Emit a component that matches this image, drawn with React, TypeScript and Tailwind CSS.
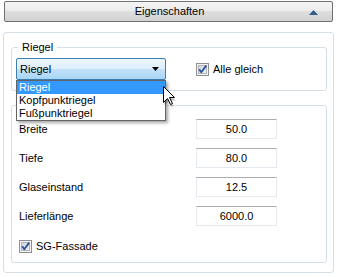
import React from "react";

function CheckBox() {
  return (
    <svg width="13" height="13" viewBox="0 0 13 13" className="shrink-0 block">
      <defs>
        <linearGradient id="cbg" x1="0" y1="0" x2="1" y2="1">
          <stop offset="0" stopColor="#cfd3d8" />
          <stop offset="1" stopColor="#f4f4f4" />
        </linearGradient>
      </defs>
      <rect x="0.5" y="0.5" width="12" height="12" fill="#f4f4f4" stroke="#8e8f8f" />
      <rect x="2.5" y="2.5" width="8" height="8" fill="url(#cbg)" stroke="#b0b4b9" strokeWidth="1" />
      <path d="M3.2 6.2 L5.3 9.2 L10.2 2.6" fill="none" stroke="#2a4f9a" strokeWidth="1.8" strokeLinejoin="round" />
    </svg>
  );
}

function Cursor() {
  return (
    <svg width="14" height="21" viewBox="0 0 14 21" className="block">
      <path
        d="M1.5 3.5 L1.5 19.5 L5.5 15.5 L8.5 21 L10.5 20 L7.8 14.5 L12.5 14.5 Z"
        fill="rgba(0,0,0,0.25)"
      />
      <path
        d="M0.5 0.5 L0.5 16.5 L4.5 12.5 L7.5 18.5 L9.5 17.5 L6.5 11.5 L11.5 11.5 Z"
        fill="#ffffff"
        stroke="#000000"
        strokeWidth="1"
        strokeLinejoin="miter"
      />
    </svg>
  );
}

function InputRow({ label, value }: { label: string; value: string }) {
  return (
    <div className="flex items-center h-[20px]">
      <div className="w-[184px] pl-[7px] leading-[13px]">{label}</div>
      <div className="w-[81px] h-[20px] border border-[#e3e9ef] border-t-[#abadb3] bg-white flex items-center justify-center leading-[13px]">
        {value}
      </div>
    </div>
  );
}

export default function App() {
  return (
    <div className="w-[338px] h-[277px] bg-white text-black text-[11px] font-['Liberation_Sans',Arial,sans-serif] pt-[1px] overflow-hidden">
      <div className="relative ml-[4px] w-[329px] h-[21px] rounded-[2px] border border-[#707070] bg-[linear-gradient(to_bottom,#f4f4f4_0%,#ececec_45%,#dedede_50%,#d2d2d2_100%)] flex items-center justify-center">
        <span className="leading-[13px] pl-[2px]">Eigenschaften</span>
        <svg width="9" height="5" viewBox="0 0 9 5" className="absolute right-[14px] top-[8px]">
          <path d="M0 5 L4.5 0 L9 5 Z" fill="#2d5f8f" />
        </svg>
      </div>

      <div className="ml-[3px] mt-[10px] w-[331px] h-[241px] border border-[#d5dfe5] rounded-[3px] pt-[8px] pl-[7px]">
        <fieldset className="relative w-[316px] border border-[#d5dfe5] rounded-[3px] px-[4px] pt-[4px] pb-[10px] m-0 min-w-0">
          <legend className="ml-[2px] px-[2px] leading-[13px] p-0">
            <span className="px-[2px]">Riegel</span>
          </legend>
          <div className="flex items-center">
            <div className="relative w-[150px] h-[22px]">
              <div className="w-full h-full border border-[#3c7fb1] rounded-[2px] bg-[linear-gradient(to_bottom,#edf6fd_0%,#deeefc_50%,#c3e2f9_50%,#a9d5f5_100%)] flex items-center pl-[3px] pr-[6px]">
                <span className="flex-1 leading-[13px]">Riegel</span>
                <svg width="7" height="4" viewBox="0 0 7 4">
                  <path d="M0 0 L7 0 L3.5 4 Z" fill="#000" />
                </svg>
              </div>
              <div className="absolute left-0 top-[22px] w-[150px] border border-[#646464] bg-white shadow-[2px_2px_3px_rgba(0,0,0,0.35)] z-10">
                <div className="h-[13px] leading-[13px] pl-[2px] bg-[#3399ff] text-white">Riegel</div>
                <div className="h-[13px] leading-[13px] pl-[2px]">Kopfpunktriegel</div>
                <div className="h-[13px] leading-[13px] pl-[2px]">Fußpunktriegel</div>
              </div>
              <div className="absolute left-[147px] top-[28px] z-20">
                <Cursor />
              </div>
            </div>
            <div className="ml-[30px] flex items-center gap-[4px]">
              <CheckBox />
              <span className="leading-[13px]">Alle gleich</span>
            </div>
          </div>
        </fieldset>

        <div className="mt-[14px] w-[316px] h-[158px] border border-[#d5dfe5] rounded-[3px] pt-[13px] flex flex-col gap-[9px]">
          <InputRow label="Breite" value="50.0" />
          <InputRow label="Tiefe" value="80.0" />
          <InputRow label="Glaseinstand" value="12.5" />
          <InputRow label="Lieferlänge" value="6000.0" />
          <div className="mt-[5px] pl-[7px] flex items-center gap-[4px]">
            <CheckBox />
            <span className="leading-[13px]">SG-Fassade</span>
          </div>
        </div>
      </div>
    </div>
  );
}
